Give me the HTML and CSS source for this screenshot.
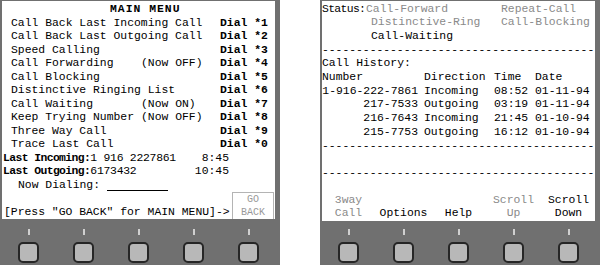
FILE: index.html
```html
<!DOCTYPE html>
<html>
<head>
<meta charset="utf-8">
<link rel="stylesheet" href="styles.css">
</head>
<body>
<div class="phone">
  <section class="panel">
    <div class="screen screen--menu">
      <div class="title">MAIN MENU</div>
      <div class="menu">
        <span class="label wide">Call Back Last Incoming Call</span><b class="dial">Dial *1</b>
        <span class="label wide">Call Back Last Outgoing Call</span><b class="dial">Dial *2</b>
        <span class="label wide">Speed Calling</span><b class="dial">Dial *3</b>
        <span class="label">Call Forwarding</span><span class="note">(Now OFF)</span><b class="dial">Dial *4</b>
        <span class="label wide">Call Blocking</span><b class="dial">Dial *5</b>
        <span class="label wide">Distinctive Ringing List</span><b class="dial">Dial *6</b>
        <span class="label">Call Waiting</span><span class="note">(Now ON)</span><b class="dial">Dial *7</b>
        <span class="label">Keep Trying Number</span><span class="note">(Now OFF)</span><b class="dial">Dial *8</b>
        <span class="label wide">Three Way Call</span><b class="dial">Dial *9</b>
        <span class="label wide">Trace Last Call</span><b class="dial">Dial *0</b>
      </div>
      <div class="last"><b class="last-label">Last Incoming:</b><span class="last-num">1 916 2227861</span><span class="last-time">8:45</span></div>
      <div class="last"><b class="last-label">Last Outgoing:</b><span class="last-num">6173432</span><span class="last-time">10:45</span></div>
      <div class="dialing">Now Dialing: <span class="blank"></span></div>
      <div class="footer">
        <span class="press">[Press "GO BACK" for MAIN MENU]-&gt;</span>
        <div class="goback">GO<br>BACK</div>
      </div>
    </div>
    <div class="keys">
      <div class="key"><i class="tick"></i><i class="btn"></i></div>
      <div class="key"><i class="tick"></i><i class="btn"></i></div>
      <div class="key"><i class="tick"></i><i class="btn"></i></div>
      <div class="key"><i class="tick"></i><i class="btn"></i></div>
      <div class="key"><i class="tick"></i><i class="btn"></i></div>
    </div>
  </section>

  <section class="panel">
    <div class="screen screen--status">
      <div class="status">
        <span class="status-label">Status:</span><span class="off">Call-Forward</span><span class="off">Repeat-Call</span>
        <span></span><span class="off ind">Distinctive-Ring</span><span class="off">Call-Blocking</span>
        <span></span><span class="ind">Call-Waiting</span><span></span>
      </div>
      <div class="rule">----------------------------------------</div>
      <div>Call History:</div>
      <div class="history">
        <span>Number</span><span>Direction</span><span>Time</span><span>Date</span>
        <span class="num">1-916-222-7861</span><span>Incoming</span><span>08:52</span><span>01-11-94</span>
        <span class="num">217-7533</span><span>Outgoing</span><span>03:19</span><span>01-11-94</span>
        <span class="num">216-7643</span><span>Incoming</span><span>21:45</span><span>01-10-94</span>
        <span class="num">215-7753</span><span>Outgoing</span><span>16:12</span><span>01-10-94</span>
      </div>
      <div class="rule">----------------------------------------</div>
      <div class="blank-row">&nbsp;</div>
      <div class="rule">----------------------------------------</div>
      <div class="softkeys">
        <span class="off">3way<br>Call</span>
        <span>Options</span>
        <span>Help</span>
        <span class="off">Scroll<br>Up</span>
        <span>Scroll<br>Down</span>
      </div>
    </div>
    <div class="keys">
      <div class="key"><i class="tick"></i><i class="btn"></i></div>
      <div class="key"><i class="tick"></i><i class="btn"></i></div>
      <div class="key"><i class="tick"></i><i class="btn"></i></div>
      <div class="key"><i class="tick"></i><i class="btn"></i></div>
      <div class="key"><i class="tick"></i><i class="btn"></i></div>
    </div>
  </section>
</div>
</body>
</html>
```
FILE: styles.css
```css
body {
  margin: 0;
  background: #fff;
  font-family: "Liberation Mono", "DejaVu Sans Mono", monospace;
  font-size: 11.4px;
  color: #000;
}
.phone {
  display: flex;
  gap: 40px;
  width: 600px;
  height: 265px;
}
.panel {
  width: 280px;
  height: 265px;
  background: #707070;
  display: flex;
  flex-direction: column;
}
.screen {
  box-sizing: border-box;
  background: #fff;
  margin: 1px 5px 0 2px;
  display: flex;
  flex-direction: column;
  overflow: hidden;
  white-space: pre;
}
.screen--menu {
  height: 218px;
  padding-top: 2.25px;
  line-height: 13.5px;
}
.screen--status {
  height: 220px;
  padding-top: 1.5px;
  line-height: 13.7px;
}
.title {
  padding-left: 108px;
  font-weight: bold;
  letter-spacing: 1px;
}
.menu {
  display: grid;
  grid-template-columns: 130px 79px 1fr;
  padding-left: 9px;
}
.wide { grid-column: span 2; }
.dial { font-weight: bold; }
.last {
  display: flex;
  width: 226px;
  padding-left: 1px;
}
.last-label { letter-spacing: -0.6px; }
.last-num { letter-spacing: -0.25px; }
.last-time { margin-left: auto; }
.dialing { padding-left: 16px; }
.blank {
  display: inline-block;
  width: 61px;
  height: 9px;
  border-bottom: 1px solid #000;
  vertical-align: -3px;
}
.footer {
  margin-top: auto;
  display: flex;
  align-items: flex-end;
  justify-content: space-between;
}
.press { padding-left: 2px; }
.goback {
  width: 42px;
  box-sizing: border-box;
  margin-right: 1px;
  border: 1px solid #b4b4b4;
  border-bottom: none;
  text-align: center;
  line-height: 13px;
  font-size: 10px;
  color: #999;
}
.keys {
  flex: 1;
  display: flex;
  align-items: flex-end;
  padding: 0 0 2px 1px;
}
.key {
  width: 55px;
  display: flex;
  flex-direction: column;
  align-items: center;
  gap: 7px;
}
.tick {
  width: 2px;
  height: 6px;
  background: #cfcfcf;
}
.btn {
  box-sizing: border-box;
  width: 21px;
  height: 21px;
  border: 2px solid #262626;
  border-radius: 5px;
  background: #b8b8b8;
}
.off { color: #8a8a8a; }
.status {
  display: grid;
  grid-template-columns: 44px 135px 1fr;
}
.status-label { letter-spacing: -0.66px; }
.ind { padding-left: 5px; }
.rule {
  white-space: nowrap;
  letter-spacing: -0.03px;
}
.history {
  display: grid;
  grid-template-columns: 102px 70px 41px 1fr;
}
.num {
  text-align: right;
  padding-right: 6px;
}
.softkeys {
  margin-top: auto;
  margin-left: -1px;
  display: grid;
  grid-template-columns: repeat(5, 55px);
  align-items: end;
  text-align: center;
}
```
